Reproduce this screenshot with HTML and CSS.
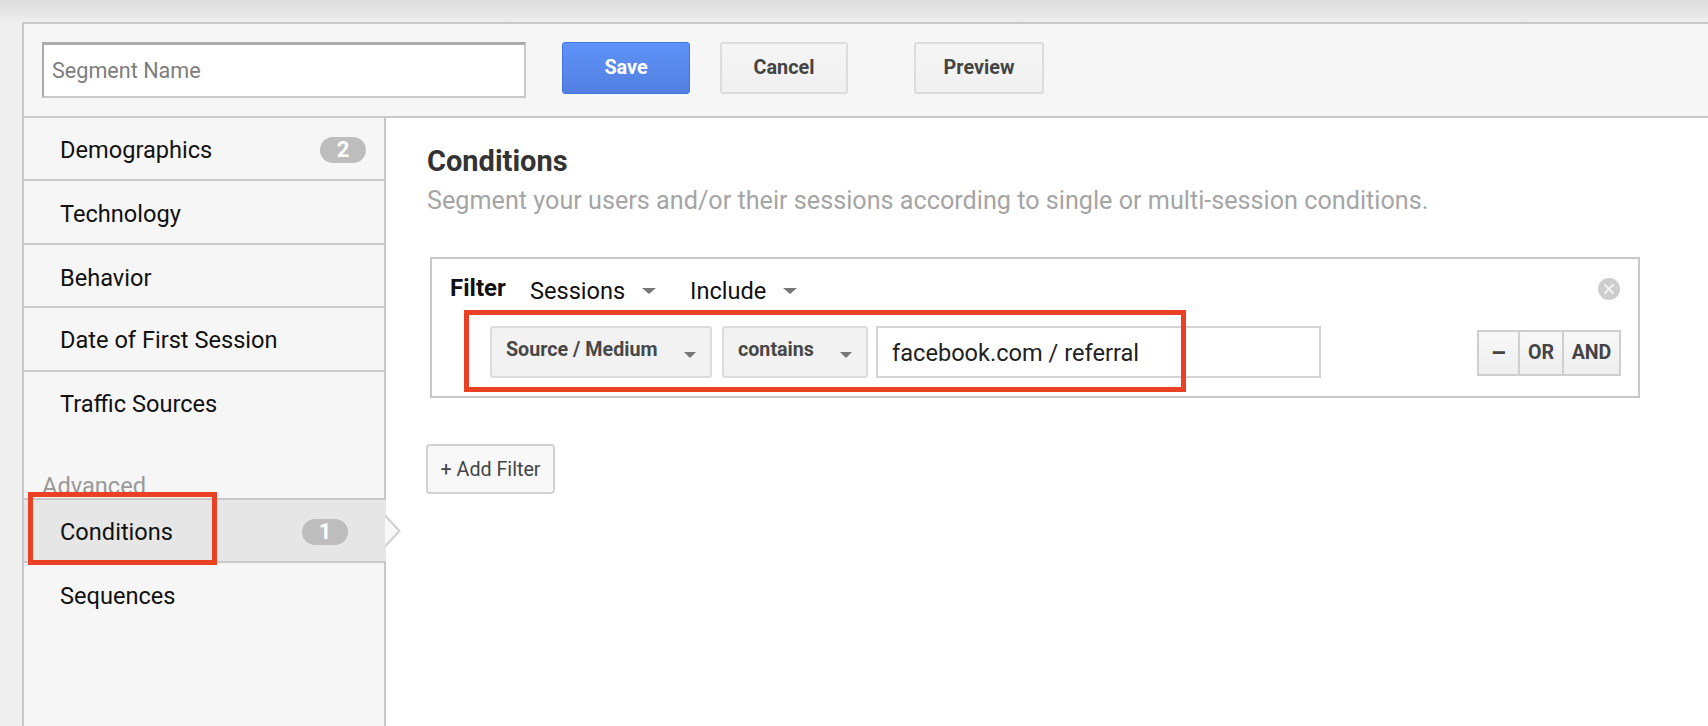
FILE: index.html
```html
<!DOCTYPE html>
<html lang="en">
<head>
<meta charset="utf-8">
<title>Segment</title>
<link rel="stylesheet" href="styles.css">
</head>
<body>
<div class="panel">
  <header class="top">
    <div class="name-input">Segment Name</div>
    <button class="btn btn-save">Save</button>
    <button class="btn btn-cancel">Cancel</button>
    <button class="btn btn-preview">Preview</button>
  </header>
  <div class="main">
    <nav class="side">
      <div class="item"><span>Demographics</span><span class="badge">2</span></div>
      <div class="item">Technology</div>
      <div class="item item-behavior">Behavior</div>
      <div class="item">Date of First Session</div>
      <div class="item item-last">Traffic Sources</div>
      <div class="adv">Advanced</div>
      <div class="item item-active"><span>Conditions</span><span class="badge badge-active">1</span>
        <svg class="pointer" width="16" height="34" viewBox="0 0 16 34"><path d="M0 1.5 L14.5 17 L0 32.5" fill="#f8f8f8" stroke="#cfcfcf" stroke-width="2"/></svg>
        <div class="mark mark-side"></div>
      </div>
      <div class="item item-plain">Sequences</div>
    </nav>
    <section class="content">
      <h1 class="title">Conditions</h1>
      <p class="sub">Segment your users and/or their sessions according to single or multi-session conditions.</p>
      <div class="filter">
        <div class="filter-head">
          <b class="filter-label">Filter</b>
          <span class="drop drop-sessions">Sessions<i class="caret"></i></span>
          <span class="drop">Include<i class="caret"></i></span>
          <svg class="close" width="22" height="22" viewBox="0 0 22 22"><circle cx="11" cy="11" r="11" fill="#cdcdcd"/><path d="M6.5 6.5 L15.5 15.5 M15.5 6.5 L6.5 15.5" stroke="#f4f4f4" stroke-width="2"/></svg>
        </div>
        <div class="filter-row">
          <div class="mark mark-row"></div>
          <div class="sel sel-source">Source / Medium<i class="caret caret-sm"></i></div>
          <div class="sel sel-contains">contains<i class="caret caret-sm"></i></div>
          <div class="val">facebook.com / referral</div>
          <div class="ops">
            <span class="op op-minus">–</span>
            <span class="op op-or">OR</span>
            <span class="op op-and">AND</span>
          </div>
        </div>
      </div>
      <button class="add">+ Add Filter</button>
    </section>
  </div>
</div>
</body>
</html>
```
FILE: styles.css
```css
* { box-sizing: border-box; }
html, body { height: 100%; }
body {
  margin: 0;
  height: 726px;
  overflow: hidden;
  padding: 22px 0 0 22px;
  font-family: Roboto, "Liberation Sans", sans-serif;
  background: linear-gradient(to bottom, #dcdcdc 0, #eeeeee 22px, #eeeeee 100%);
}
.panel {
  height: 704px;
  border-top: 2px solid #c8c8c8;
  border-left: 2px solid #c8c8c8;
  background: #f6f6f6;
  display: flex;
  flex-direction: column;
}
.top {
  height: 94px;
  flex: none;
  display: flex;
  align-items: flex-start;
  padding: 18px 0 0 18px;
  border-bottom: 2px solid #c8c8c8;
}
.name-input {
  width: 484px;
  height: 56px;
  background: #fff;
  border: 2px solid #c8c8c8;
  border-top: 3px solid #ababab;
  border-left-color: #ababab;
  padding-left: 8px;
  font-size: 21.6px;
  line-height: 52px;
  color: #7d7d7d;
}
.btn {
  height: 52px;
  width: 128px;
  border-radius: 3px;
  font: 700 19.8px Roboto, "Liberation Sans", sans-serif;
  padding: 0 0 1px;
}
.btn-save {
  margin-left: 36px;
  color: #fff;
  background: linear-gradient(#5e93f8, #527fe0);
  border: 1px solid #3f74e2;
}
.btn-cancel, .btn-preview {
  color: #444;
  background: linear-gradient(#f5f5f5, #f0f0f0);
  border: 2px solid #dcdcdc;
}
.btn-cancel { margin-left: 30px; }
.btn-preview { margin-left: 66px; width: 130px; }
.main { flex: 1; display: flex; min-height: 0; }
.side {
  width: 362px;
  flex: none;
  border-right: 2px solid #c8c8c8;
}
.item {
  position: relative;
  height: 63.4px;
  padding: 3px 18px 0 36px;
  border-bottom: 2px solid #c8c8c8;
  display: flex;
  align-items: center;
  justify-content: space-between;
  font-size: 23.6px;
  color: #111;
}
.item-behavior { padding-top: 5px; }
.item-last { border-bottom: 0; padding-top: 1px; }
.adv {
  margin: 40px 0 0 18px;
  height: 23px;
  line-height: 22px;
  font-size: 23.6px;
  color: #999;
}
.item-active {
  height: 65px;
  margin-right: -2px;
  background: #e6e6e6;
  border-top: 2px solid #c8c8c8;
  padding: 3px 38px 0 36px;
}
.item-plain { border-bottom: 0; padding-top: 2px; }
.badge {
  width: 46px;
  height: 26px;
  border-radius: 13px;
  background: #bdbdbd;
  color: #fff;
  font-weight: 700;
  font-size: 22px;
  line-height: 26px;
  text-align: center;
}
.pointer { position: absolute; right: -15px; top: 14px; }
.mark { position: absolute; border: 5px solid #ea4125; pointer-events: none; }
.mark-side { left: 4px; top: -8px; width: 189px; height: 73px; }
.mark-row { left: 32px; top: -16px; width: 722px; height: 82px; }
.content { flex: 1; padding: 28px 0 0 41px; background: #fff; min-width: 0; }
.title {
  margin: 0;
  font-size: 29px;
  line-height: 30px;
  font-weight: 700;
  color: #333;
}
.sub {
  margin: 11px 0 0;
  font-size: 25.2px;
  line-height: 28px;
  color: #a5a5a5;
}
.filter {
  width: 1210px;
  height: 141px;
  margin: 42px 0 0 3px;
  border: 2px solid #c8c8c8;
}
.filter-head {
  display: flex;
  align-items: center;
  height: 67px;
  padding: 0 18px 0 18px;
}
.filter-label { font-size: 24px; color: #111; width: 80px; margin-top: -10px; }
.drop { font-size: 23.6px; color: #111; display: inline-flex; align-items: center; margin-top: -4px; }
.drop-sessions { width: 160px; }
.caret {
  width: 0;
  height: 0;
  margin-left: 17px;
  border-left: 7.5px solid transparent;
  border-right: 7.5px solid transparent;
  border-top: 6px solid #777;
}
.caret-sm { margin-left: 0; position: absolute; right: 14px; top: 24px; border-left-width: 6.5px; border-right-width: 6.5px; }
.close { margin-left: auto; margin-top: -7px; }
.filter-row {
  position: relative;
  display: flex;
  height: 52px;
  padding-left: 58px;
}
.sel {
  position: relative;
  height: 52px;
  border: 2px solid #dcdcdc;
  border-radius: 3px;
  background: #f2f2f2;
  font-size: 19.7px;
  font-weight: 700;
  line-height: 44px;
  color: #484848;
  padding-left: 14px;
}
.sel-source { width: 222px; }
.sel-contains { width: 146px; margin-left: 10px; }
.val {
  width: 445px;
  height: 52px;
  margin-left: 8px;
  border: 2px solid #d4d4d4;
  background: #fff;
  font-size: 23.6px;
  line-height: 50px;
  padding-left: 14px;
  color: #222;
}
.ops {
  display: flex;
  margin-left: auto;
  margin-right: 17px;
  margin-top: 4px;
  height: 46px;
  border: 2px solid #cfcfcf;
  background: linear-gradient(#f8f8f8, #eeeeee);
  font-size: 19.6px;
  font-weight: 700;
  color: #444;
  line-height: 42px;
  text-align: center;
}
.op-minus { width: 41px; font-size: 24px; border-right: 2px solid #cfcfcf; }
.op-or { width: 44px; border-right: 2px solid #cfcfcf; }
.op-and { width: 55px; }
.add {
  display: block;
  margin: 46px 0 0 -1px;
  width: 129px;
  height: 50px;
  border: 2px solid #d2d2d2;
  border-radius: 4px;
  background: #f8f8f8;
  font: 400 19.7px Roboto, "Liberation Sans", sans-serif;
  color: #444;
  padding: 0;
}
```
